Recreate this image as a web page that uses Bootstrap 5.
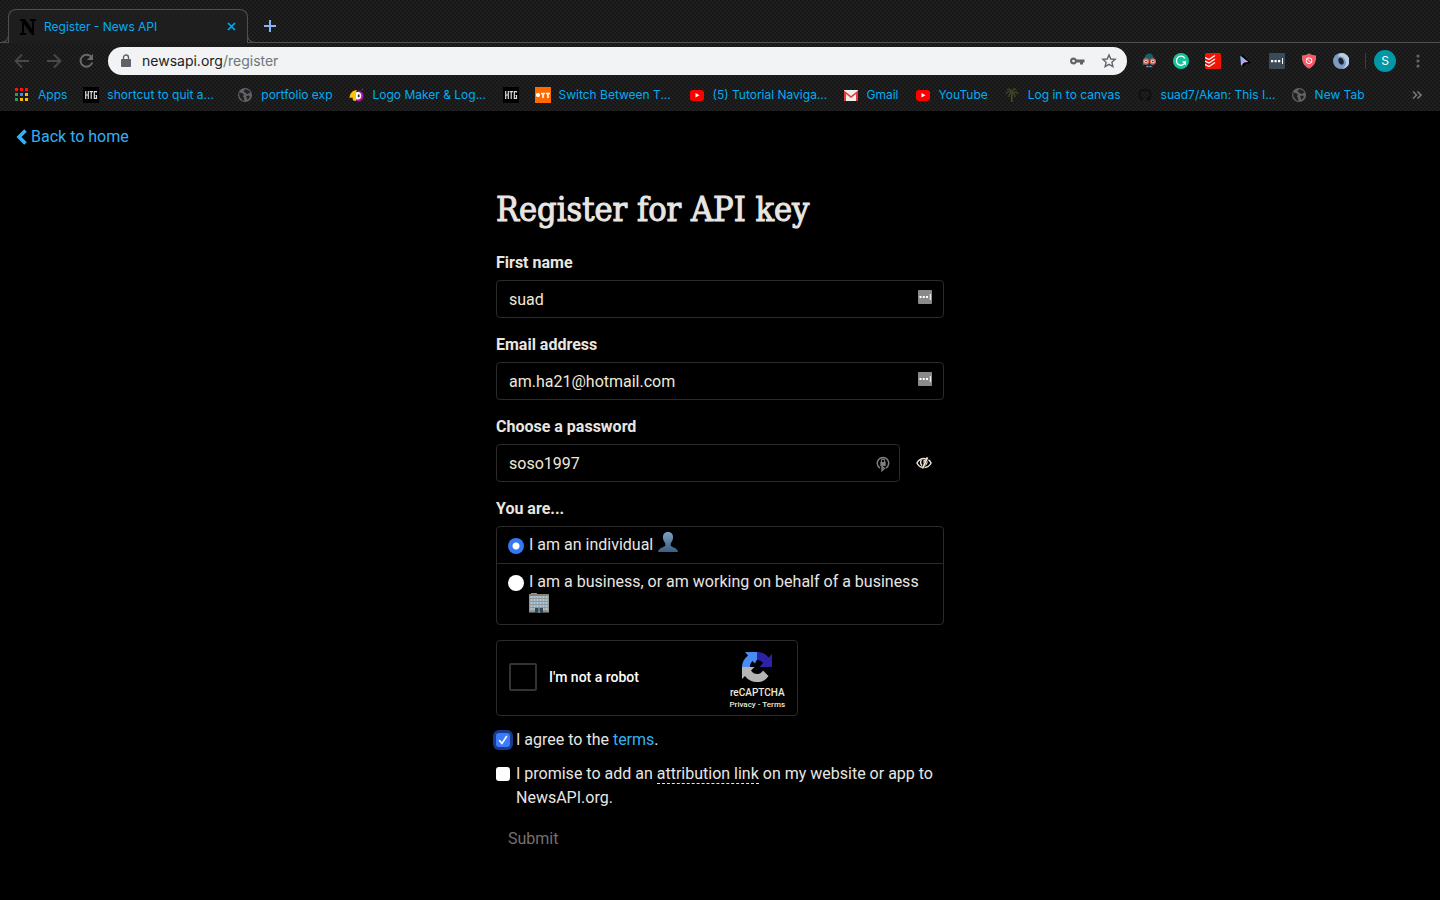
<!DOCTYPE html>
<html lang="en">
<head>
<meta charset="utf-8">
<meta name="viewport" content="width=device-width, initial-scale=1">
<title>Register - News API</title>
<link href="https://cdn.jsdelivr.net/npm/bootstrap@5.3.0/dist/css/bootstrap.min.css" rel="stylesheet">
<style>
  body { background: #000; color: #e8e6e3; font-family: Roboto, sans-serif; font-size: 16px; line-height: 24px; }
  svg { display: block; flex: none; }
  button { padding: 0; border: 0; background: none; }

  /* browser chrome */
  .chrome {
    font: 12px/16px Inter, sans-serif; color: #00adf5; background-color: #202020;
    background-image: radial-gradient(circle at 1px 1px, #171717 1px, transparent 1px), radial-gradient(circle at 3px 3px, #171717 1px, transparent 1px);
    background-size: 4px 4px;
  }
  .tabstrip { height: 43px; padding: 9px 0 0; border-bottom: 1px solid #505050; }
  .tab { position: relative; width: 240px; height: 34px; margin: 0 15px 0 8px; padding: 0 11px 0 10px; border: 1px solid #505050; border-bottom: 0; border-radius: 8px 8px 0 0; background: #1e1e1e; }
  .tab::before, .tab::after { content: ""; position: absolute; bottom: 0; width: 8px; height: 8px; border-bottom: 1px solid #505050; }
  .tab::before { left: -8px; border-right: 1px solid #505050; border-bottom-right-radius: 8px; }
  .tab::after { right: -8px; border-left: 1px solid #505050; border-bottom-left-radius: 8px; }
  .tab span { padding-left: 7px; }
  .toolbar { height: 36px; padding: 0 20px 0 14px; }
  .omnibox { height: 28px; margin: 0 14px 0 13px; padding: 0 10px 0 12px; border-radius: 14px; background: #f1f3f4; color: #202124; font: 14px/20px Inter, sans-serif; }
  .omnibox div { padding-left: 10px; }
  .omnibox span { color: #70757a; }
  .ext { gap: 16px; }
  .avatar { width: 22px; height: 22px; border-radius: 50%; background: #0097a7; color: #fff; line-height: 22px; }
  .sep { width: 1px; height: 16px; background: #3c3c3c; }
  .bookmarks { height: 32px; padding: 0 18px 0 14px; gap: 16px; }
  .bookmarks a { gap: 8px; color: inherit; text-decoration: none; white-space: nowrap; }
  .clip { width: 114px; }

  /* page */
  .back { padding: 14px 16px 0; }
  .page-link-blue { color: #33b1f5; text-decoration: none; }
  .signup { max-width: 448px; padding-top: 35px; }
  h1 { margin: 0 0 20px; font: 34px/44px "DejaVu Serif Condensed", "DejaVu Serif", serif; color: #e8e6e3; -webkit-text-stroke: 1px #e8e6e3; }
  .form-label { margin-bottom: 5px; font-weight: 700; display: block; }
  .field { margin-bottom: 15px; }
  .form-control, .form-control:focus { background: #000; color: #f0e8d8; border: 1px solid #2b2b2b; border-radius: 4px; box-shadow: none; }
  .form-control { height: 38px; padding: 6px 40px 6px 12px; }
  .field-icon { position: absolute; right: 12px; top: 10px; }
  .lock-icon { right: 8px; }
  .eye { width: 44px; }
  .choices { border: 1px solid #2b2b2b; border-radius: 4px; margin-bottom: 15px; }
  .choices label { padding: 6px 12px 6px 11px; gap: 5px; }
  .choices label + label { border-top: 1px solid #2b2b2b; }
  .choices input { appearance: none; flex: none; width: 16px; height: 16px; margin: 5px 0 0; border-radius: 50%; background: #fff; }
  .choices input:checked { background: radial-gradient(circle, #fff 3px, #3478f6 4px); }
  .emoji { display: inline-block; vertical-align: -2px; margin: -4px 0 0 1px; }
  .choices .building { margin-left: 0; }
  .captcha { max-width: 302px; height: 76px; padding: 0 12px; border: 1px solid #2b2b2b; border-radius: 4px; margin-bottom: 12px; font-size: 14px; font-weight: 500; color: #fff; }
  .captcha input { appearance: none; width: 28px; height: 28px; margin: 0 12px 0 0; border: 2px solid #333; border-radius: 2px; background: #000; }
  .captcha input, .captcha label { margin-bottom: 2px; }
  .brand { padding-top: 6px; font: 500 10px/14px Roboto, sans-serif; color: #f0e8d8; }
  .brand div { font-size: 8px; line-height: 10px; }
  .brand a { color: inherit; text-decoration: none; }
  .consent { gap: 6px; margin-bottom: 10px; }
  .consent input { appearance: none; flex: none; width: 14px; height: 14px; margin: 5px 0 0; border-radius: 3px; background: #fff; }
  .consent input:checked { background: #3b7cff url("data:image/svg+xml,%3Csvg xmlns='http://www.w3.org/2000/svg' viewBox='0 0 14 14'%3E%3Cpath d='M3.5 7.5l2.5 3 4.500-7' fill='none' stroke='white' stroke-width='1.600' stroke-linecap='round'/%3E%3C/svg%3E"); box-shadow: 0 0 0 3px #173a8c; }
  .hint { border-bottom: 1px dashed #e8e6e3; }
  .send { height: 38px; padding: 0 12px; color: #76716a; }
</style>
</head>
<body>
<svg width="0" height="0" class="position-absolute" aria-hidden="true">
  <defs>
    <symbol id="globe" viewBox="0 0 16 16"><circle cx="8" cy="8" r="7" fill="#606368"/><path d="M2 5.500l3 .5 2 1.500-1 2 1 1 .5 3.500-2-.5-3-3.500zM8 2l4 1.500 1.500 2-2 1-2 .5-1-1.500-2-.5zM9 9l3-.5 1 1.500-2.500 3z" fill="#222"/></symbol>
    <symbol id="yt" viewBox="0 0 16 16"><rect x="1" y="3" width="14" height="11" rx="3" fill="#f00"/><path d="M6.500 6v4.500l4-2.200z" fill="#fff"/></symbol>
    <symbol id="htg" viewBox="0 0 16 16"><rect width="16" height="16" fill="#000"/><path d="M2.700 4v8M5.300 4v8M2.700 8h2.600M6.500 4.600h3.500M8.200 4.600V12M13.500 5.500V4.600h-2.200v6.800h2.200V8.500h-1" fill="none" stroke="#ddd" stroke-width="1.200"/></symbol>
    <symbol id="dots" viewBox="0 0 14 14"><rect width="14" height="14" rx="1" fill="#8a8a8a"/><path d="M1.500 6h2v2h-2zM4.800 6h2v2h-2zM8 6h2v2H8zM11.800 4h1v6h-1z" fill="#fff"/></symbol>
  </defs>
</svg>

<header class="chrome">
  <div class="tabstrip d-flex">
    <div class="tab d-flex align-items-center">
      <svg width="18" height="18" viewBox="0 0 18 18"><path d="M1 1h5l7 10V3h-2V1h6v2h-2v14h-2L5 6v9h2v2H1v-2h2V3H1z" fill="#000"/></svg>
      <span class="flex-grow-1 text-nowrap">Register - News API</span>
      <button type="button" aria-label="Close tab"><svg width="9" height="9" viewBox="0 0 9 9"><path d="M1 1l7 7M8 1L1 8" stroke="#00adf5" stroke-width="1.600"/></svg></button>
    </div>
    <button type="button" aria-label="New tab"><svg width="14" height="14" viewBox="0 0 14 14"><path d="M7 1v12M1 7h12" stroke="#8ab4f8" stroke-width="2"/></svg></button>
  </div>

  <div class="toolbar d-flex align-items-center">
    <div class="d-flex gap-3">
      <button type="button" aria-label="Back"><svg width="16" height="16" viewBox="0 0 16 16"><path d="M15 8H2M8 1.500L1.500 8 8 14.500" fill="none" stroke="#494949" stroke-width="1.800"/></svg></button>
      <button type="button" aria-label="Forward"><svg width="16" height="16" viewBox="0 0 16 16"><path d="M1 8h13M8 1.500L14.500 8 8 14.500" fill="none" stroke="#494949" stroke-width="1.800"/></svg></button>
      <button type="button" aria-label="Reload"><svg width="17" height="16" viewBox="0 0 17 16"><path d="M13.500 4.200A6 6 0 1 0 14.300 9.500" fill="none" stroke="#6a6a6a" stroke-width="2"/><path d="M15 .8v6.200H8.800z" fill="#6a6a6a"/></svg></button>
    </div>
    <div class="omnibox d-flex align-items-center flex-grow-1">
      <svg width="12" height="14" viewBox="0 0 12 14"><rect x="1" y="5" width="10" height="8" rx="1" fill="#5f6368"/><path d="M3.500 5V3.500a2.500 2.500 0 0 1 5 0V5" fill="none" stroke="#5f6368" stroke-width="1.400"/></svg>
      <div class="flex-grow-1">newsapi.org<span>/register</span></div>
      <svg width="16" height="16" viewBox="0 0 16 16"><path d="M4.500 4.500a3.500 3.500 0 1 0 3.200 5H11v2h3v-2h1.500v-3H7.700a3.500 3.500 0 0 0-3.200-2zm0 2.200a1.300 1.300 0 1 1 0 2.600 1.300 1.300 0 0 1 0-2.600z" fill="#5f6368" fill-rule="evenodd"/></svg>
      <svg class="ms-3" width="16" height="16" viewBox="0 0 16 16"><path d="M8 2l1.800 4 4.300.4-3.200 2.900 1 4.200L8 11.300l-3.900 2.200 1-4.200-3.200-2.900L6.200 6z" fill="none" stroke="#5f6368" stroke-width="1.400"/></svg>
    </div>
    <div class="ext d-flex align-items-center">
      <svg width="16" height="16" viewBox="0 0 16 16"><path d="M1.500 13C2 5 5 .5 8 .5S13 3 13.500 9l-3-3z" fill="#17606c"/><rect x="5" y="9" width="7" height="6" fill="#1f3340"/><circle cx="5" cy="8.500" r="2.400" fill="#fff" stroke="#e8604c" stroke-width="1.500"/><circle cx="11.800" cy="8.500" r="2.400" fill="#fff" stroke="#e8604c" stroke-width="1.500"/><circle cx="5" cy="8.500" r=".9" fill="#333"/><circle cx="11.800" cy="8.500" r=".9" fill="#333"/><path d="M5.500 13.500h6" stroke="#6ba7bd" stroke-dasharray="2 1"/></svg>
      <svg width="16" height="16" viewBox="0 0 16 16"><circle cx="8" cy="8" r="8" fill="#15c39a"/><path d="M11.800 5.300A4.500 4.500 0 1 0 12.300 9H9.500" fill="none" stroke="#fff" stroke-width="1.300"/><path d="M12.300 8.500V12" stroke="#fff" stroke-width="1.200"/></svg>
      <svg width="16" height="16" viewBox="0 0 16 16"><rect width="16" height="16" rx="1.500" fill="#f21403"/><path d="M0 4.500l4 2 6-4M0 8l4 2 6-4M0 11.500l4 2 6-4" fill="none" stroke="#fff" stroke-width="1.300"/></svg>
      <svg width="16" height="16" viewBox="0 0 16 16"><path d="M5 1l9 9-5 1-3 3z" fill="#000"/><path d="M3.500 3l8 6-4.500.5L4 13z" fill="#c9a0f0"/><path d="M3.500 3l4 3L4 10z" fill="#6fc3f5"/></svg>
      <svg width="16" height="16" viewBox="0 0 16 16"><rect width="16" height="16" rx="1" fill="#3a4a57"/><path d="M2 7h2.200v2.200H2zM5.500 7h2.200v2.200H5.500zM9 7h2.200v2.200H9zM13 5h1v6h-1z" fill="#fff"/></svg>
      <svg width="16" height="16" viewBox="0 0 16 16"><path d="M8 .8c2 1.400 4 2 6.500 2C15 9 12.500 13 8 15.300 3.500 13 1 9 1.500 2.800 4 2.800 6 2.200 8 .8z" fill="#ff5562" stroke="#d9868b" stroke-width=".8"/><circle cx="8" cy="7.700" r="2.900" fill="none" stroke="#fff" stroke-width="1"/><path d="M6 5.700l4 4" stroke="#fff"/></svg>
      <svg width="16" height="16" viewBox="0 0 16 16"><circle cx="8" cy="8" r="8" fill="#7c9cc4"/><path d="M8 0a8 8 0 0 1 1 16c4-2 5-6 3-9.500C11 4 9 3 5 3.500 5.500 1.500 6.500.5 8 0z" fill="#b8cce4"/><ellipse cx="8" cy="8.200" rx="2.500" ry="3.600" fill="#1c2430" transform="rotate(-20 8 8)"/></svg>
      <div class="d-flex align-items-center"><span class="sep me-2"></span><div class="avatar text-center">S</div></div>
      <button type="button" aria-label="Menu"><svg width="8" height="16" viewBox="0 0 8 16"><g fill="#666"><circle cx="6" cy="3" r="1.600"/><circle cx="6" cy="8" r="1.600"/><circle cx="6" cy="13" r="1.600"/></g></svg></button>
    </div>
  </div>

  <nav class="bookmarks d-flex align-items-center" aria-label="Bookmarks">
    <a href="#" class="d-flex"><svg width="16" height="16" viewBox="0 0 16 16"><path d="M1 1h3v3H1zM6 1h3v3H6zM11 1h3v3h-3z" fill="#f11"/><path d="M1 6h3v3H1zM1 11h3v3H1z" fill="#1da462"/><path d="M6 6h3v3H6z" fill="#4688f4"/><path d="M11 6h3v3h-3zM6 11h3v3H6zM11 11h3v3h-3z" fill="#ffb900"/></svg><span>Apps</span></a>
    <a href="#" class="d-flex"><svg width="16" height="16"><use href="#htg"/></svg><span class="clip">shortcut to quit a...</span></a>
    <a href="#" class="d-flex"><svg width="16" height="16"><use href="#globe"/></svg><span>portfolio exp</span></a>
    <a href="#" class="d-flex"><svg width="16" height="16" viewBox="0 0 16 16"><path d="M9 3.500a5 5 0 0 1 0 11l-2-1z" fill="#b012a5"/><path d="M12 2.500l2-1v2z" fill="#b012a5"/><circle cx="8.500" cy="8.800" r="3.800" fill="#fff"/><path d="M.5 11C1 5.500 4 3 8 3.200 7 5 6.500 6 7 8v6l-3-.5-.5-3z" fill="#ffc400"/><path d="M8.800 7.500h1.700v2.700H8.800z" fill="#222"/></svg><span class="clip">Logo Maker &amp; Log...</span></a>
    <a href="#" class="d-flex" aria-label="How-To Geek"><svg width="16" height="16"><use href="#htg"/></svg></a>
    <a href="#" class="d-flex"><svg width="16" height="16" viewBox="0 0 16 16"><rect width="16" height="16" fill="#ff6a00"/><circle cx="3" cy="8" r="1.700" fill="#fff" stroke="#fff"/><path d="M6 6.500h4M8 6v5M11 6.500h4M13 6v5" stroke="#fff" stroke-width="1.600"/></svg><span class="clip">Switch Between T...</span></a>
    <a href="#" class="d-flex"><svg width="16" height="16"><use href="#yt"/></svg><span class="clip">(5) Tutorial Naviga...</span></a>
    <a href="#" class="d-flex"><svg width="16" height="16" viewBox="0 0 16 16"><path d="M1 3h14v11H1z" fill="#eee"/><path d="M1 14V3.500L8 9l7-5.500V14h-2V7l-5 4-5-4v7z" fill="#e53935"/></svg><span>Gmail</span></a>
    <a href="#" class="d-flex"><svg width="16" height="16"><use href="#yt"/></svg><span>YouTube</span></a>
    <a href="#" class="d-flex"><svg width="16" height="16" viewBox="0 0 16 16"><path d="M7 7h1.500v8H7z" fill="#50501f"/><path d="M8 6C6 4 3 4 2 7M8 6C6 1 4 2 3 3M8 6c0-4 3-5 4-3M8 6c3-2 5-1 6 1M8 6c-2 0-3 2-3 4M8 6c2 0 3 2 3 4" fill="none" stroke="#3b4420" stroke-width="1.500"/></svg><span>Log in to canvas</span></a>
    <a href="#" class="d-flex"><svg width="16" height="16" viewBox="0 0 16 16"><path d="M6 14C-1 12-.5 2 8 1.500 16.500 2 17 12 10 14.500c0-2 .3-3-.8-4C13 10 13 7 11.800 5.500L11.500 4l-2 .6h-3L4.500 4 4.200 5.500C3 7 3 10 6.800 10.500 6 11.500 6 12.500 6 14z" fill="#111"/></svg><span class="clip">suad7/Akan: This I...</span></a>
    <a href="#" class="d-flex"><svg width="16" height="16"><use href="#globe"/></svg><span>New Tab</span></a>
    <button type="button" class="ms-auto" aria-label="More bookmarks"><svg width="10" height="10" viewBox="0 0 10 10"><path d="M1 1.500L4.500 5 1 8.500M5.500 1.500L9 5 5.500 8.500" fill="none" stroke="#777" stroke-width="1.600"/></svg></button>
  </nav>
</header>

<main>
  <div class="back"><a href="#" class="page-link-blue d-inline-flex align-items-center gap-1"><svg width="11" height="16" viewBox="0 0 11 16"><path d="M9.500 1.500L3 8l6.500 6.500" fill="none" stroke="#33b1f5" stroke-width="3.600"/></svg>Back to home</a></div>

  <form class="signup mx-auto">
    <h1 class="text-nowrap">Register for API key</h1>
    <div class="field">
      <label class="form-label" for="first">First name</label>
      <div class="position-relative"><input class="form-control" id="first" value="suad"><svg class="field-icon" width="14" height="14"><use href="#dots"/></svg></div>
    </div>
    <div class="field">
      <label class="form-label" for="email">Email address</label>
      <div class="position-relative"><input class="form-control" id="email" type="email" value="am.ha21@hotmail.com"><svg class="field-icon" width="14" height="14"><use href="#dots"/></svg></div>
    </div>
    <div class="field">
      <label class="form-label" for="pass">Choose a password</label>
      <div class="d-flex">
        <div class="position-relative flex-grow-1"><input class="form-control" id="pass" value="soso1997"><svg class="field-icon lock-icon" width="18" height="18" viewBox="0 0 18 18"><path d="M6 14A5.700 5.700 0 1 1 12 14M8 12.500l2.500 1.800L8 16.500z" fill="none" stroke="#7d7d7d" stroke-width="1.500"/><rect x="6.300" y="8" width="5.400" height="4" fill="#7d7d7d"/><path d="M7.400 8V6.700a1.600 1.600 0 0 1 3.200 0V8" fill="none" stroke="#7d7d7d" stroke-width="1.200"/></svg></div>
        <button type="button" class="eye d-flex align-items-center justify-content-center" aria-label="Hide password"><svg class="ms-1" width="16" height="12" viewBox="0 0 16 12"><path d="M6.500 10.300C4 10 2 8.300 .9 6 2.500 3.200 5 1.500 8 1.500c.8 0 1.400.1 2 .3M12.500 2.800C13.700 3.600 14.500 4.600 15.100 6 14 8.300 11.500 10.300 8.500 10.500M5.500 3.200C4.300 4.800 4.500 7 6 8.500" fill="none" stroke="#f0e8d8" stroke-width="1.400"/><path d="M11.500.3L6.500 11.500" stroke="#f0e8d8" stroke-width="1.800"/><path d="M11.500 3.500c.6 2.500-.4 4.500-2.700 5.500zM7.500 3l2-.5-2 4.500z" fill="#f0e8d8"/></svg></button>
      </div>
    </div>
    <div class="form-label" id="kind">You are...</div>
    <div class="choices" role="radiogroup" aria-labelledby="kind">
      <label class="d-flex" for="ind"><input type="radio" name="kind" id="ind" checked><span>I am an individual <svg class="emoji" width="20" height="20" viewBox="0 0 20 20"><defs><linearGradient id="bust" x2="0" y2="1"><stop stop-color="#7c9fc0"/><stop offset="1" stop-color="#3b5f83"/></linearGradient></defs><path d="M10 0c3.500 0 5.300 2.300 5 6-.2 2.500-1.300 4-2.300 5.300v2.500c1 1.600 6.300 1.400 7.300 6.200H0c1-4.800 6.300-4.600 7.300-6.200v-2.500C6.300 10 5.200 8.500 5 6c-.3-3.700 1.500-6 5-6z" fill="url(#bust)"/></svg></span></label>
      <label class="d-flex" for="biz"><input type="radio" name="kind" id="biz"><span>I am a business, or am working on behalf of a business <svg class="emoji building" width="20" height="20" viewBox="0 0 20 20"><path d="M2 0h6v1h12v18.500H0V1h2z" fill="#99948d"/><path d="M1.500 4h17M1.500 7h17M1.500 10h17M1.500 13h17M1.500 16h17" stroke="#9ed0ec" stroke-width="2" stroke-dasharray="2 1"/><path d="M0 2h20" stroke="#85685b"/><path d="M6 15h8v5H6z" fill="#374654"/><path d="M10 15v5" stroke="#9fb8c6"/></svg></span></label>
    </div>
    <div class="captcha d-flex align-items-center">
      <input type="checkbox" id="robot"><label class="flex-grow-1" for="robot">I'm not a robot</label>
      <div class="brand text-center text-nowrap">
        <svg class="mx-auto mb-1" width="30" height="30" viewBox="0 0 30 30"><path d="M15 0H3l3 3.500C2 6.500 0 10.500 0 15h8c0-3 1-4.500 2.500-6l2.500 2.500 2-4z" fill="#4a8af4"/><path d="M15 0c5 0 9 2 11.500 5.500L30 2v13H17.500l3.500-4c-1.500-2-3-3-6-3z" fill="#2d22a5"/><path d="M0 15v12l3-3c3 4 7 6 12 6 5.500 0 9-2 11.500-6L21 18.500c-1.300 2.300-3 3.500-5.500 3.500-3 0-5-1-6.500-3.500l3.500-3.500z" fill="#b5b5b5"/></svg>
        reCAPTCHA
        <div><a href="#">Privacy</a> - <a href="#">Terms</a></div>
      </div>
    </div>
    <div class="consent d-flex"><input type="checkbox" id="terms" checked><label for="terms">I agree to the <a href="#" class="page-link-blue">terms</a>.</label></div>
    <div class="consent d-flex"><input type="checkbox" id="promise"><label for="promise">I promise to add an <span class="hint">attribution link</span> on my website or app to NewsAPI.org.</label></div>
    <button type="submit" class="send" disabled>Submit</button>
  </form>
</main>
<script src="https://cdn.jsdelivr.net/npm/bootstrap@5.3.0/dist/js/bootstrap.bundle.min.js"></script>
</body>
</html>
